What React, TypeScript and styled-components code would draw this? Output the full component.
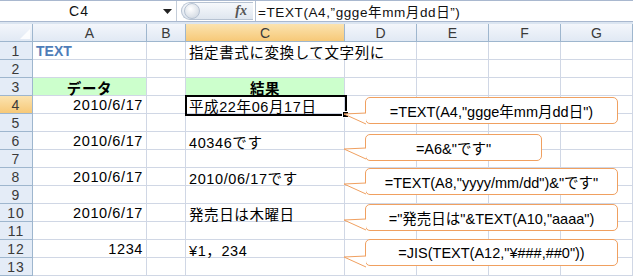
import styled, { createGlobalStyle } from 'styled-components';

const GlobalStyle = createGlobalStyle`
  html, body {
    margin: 0;
    padding: 0;
    background: #ffffff;
    overflow: hidden;
  }
`;

const COLS = [
  { key: 'A', width: 114 },
  { key: 'B', width: 39 },
  { key: 'C', width: 159 },
  { key: 'D', width: 72 },
  { key: 'E', width: 72 },
  { key: 'F', width: 72 },
  { key: 'G', width: 72 },
];

type CellData = {
  text: string;
  align?: 'left' | 'center' | 'right';
  fill?: string;
  bold?: boolean;
  heading?: boolean;
  color?: string;
  span?: number;
};

const DATA: Record<string, CellData> = {
  A1: { text: 'TEXT', bold: true, color: '#4f7db8' },
  C1: { text: '指定書式に変換して文字列に', span: 2 },
  A3: { text: 'データ', align: 'center', fill: '#ccffcc', heading: true },
  C3: { text: '結果', align: 'center', fill: '#ccffcc', heading: true },
  A4: { text: '2010/6/17', align: 'right' },
  C4: { text: '平成22年06月17日' },
  A6: { text: '2010/6/17', align: 'right' },
  C6: { text: '40346です' },
  A8: { text: '2010/6/17', align: 'right' },
  C8: { text: '2010/06/17です' },
  A10: { text: '2010/6/17', align: 'right' },
  C10: { text: '発売日は木曜日' },
  A12: { text: '1234', align: 'right' },
  C12: { text: '¥1，234' },
};

// cells swallowed by a span to their left
const COVERED = new Set(['D1']);

const CALLOUTS = [
  { text: '=TEXT(A4,"ggge年mm月dd日")', top: 97, width: 253, tipY: 16 },
  { text: '=A6&"です"', top: 134, width: 177, tipY: 14 },
  { text: '=TEXT(A8,"yyyy/mm/dd")&"です"', top: 168, width: 253, tipY: 15 },
  { text: '="発売日は"&TEXT(A10,"aaaa")', top: 204, width: 253, tipY: 15 },
  { text: '=JIS(TEXT(A12,"¥###,##0"))', top: 239, width: 253, tipY: 17 },
];

export default function App() {
  const rows = Array.from({ length: 13 }, (_, i) => i + 1);
  return (
    <>
      <GlobalStyle />
      <Frame>
        <FormulaBar>
          <NameBox>C4</NameBox>
          <DropArrow>
            <svg width="9" height="5" viewBox="0 0 9 5">
              <path d="M0 0 L9 0 L4.5 5 Z" fill="#222" />
            </svg>
          </DropArrow>
          <FxPill>
            <Grip />
            <Fx>fx</Fx>
          </FxPill>
          <FormulaInput>=TEXT(A4,&#8221;ggge年mm月dd日&#8221;)</FormulaInput>
        </FormulaBar>
        <Spacer />
        <Sheet>
          <Corner>
            <svg width="10" height="10" viewBox="0 0 10 10">
              <path d="M10 0 L10 10 L0 10 Z" fill="#ffffff" opacity="0.85" />
            </svg>
          </Corner>
          {COLS.map((c) => (
            <ColHeader key={c.key} $active={c.key === 'C'}>
              {c.key}
            </ColHeader>
          ))}
          {rows.map((r) => (
            <Row key={r}>
              <RowHeader $active={r === 4}>{r}</RowHeader>
              {COLS.filter((c) => !COVERED.has(`${c.key}${r}`)).map((c) => {
                const d = DATA[`${c.key}${r}`];
                return (
                  <Cell
                    key={c.key}
                    $align={d?.align ?? 'left'}
                    $fill={d?.fill}
                    $bold={d?.bold}
                    $heading={d?.heading}
                    $color={d?.color}
                    $span={d?.span ?? 1}
                  >
                    {d?.text}
                  </Cell>
                );
              })}
            </Row>
          ))}
          <Selection>
            <FillHandle />
          </Selection>
        </Sheet>
        {CALLOUTS.map((c) => (
          <Callout key={c.text} style={{ top: c.top, width: c.width }}>
            <Tail width="24" height="14" viewBox="0 0 24 14" style={{ top: c.tipY - 1 }}>
              <path d="M23 0 L1 1 L23 11" fill="#ffffff" stroke="#f0a060" strokeWidth="1" />
            </Tail>
            {c.text}
          </Callout>
        ))}
      </Frame>
    </>
  );
}

const cellFont = "'Liberation Sans', 'Noto Sans CJK JP', sans-serif";

const Frame = styled.div`
  position: relative;
  width: 633px;
  height: 277px;
  overflow: hidden;
  background: #ffffff;
  font-family: ${cellFont};
`;

const FormulaBar = styled.div`
  display: flex;
  align-items: stretch;
  height: 22px;
  background: #ffffff;
  border-top: 1px solid #a9b8cf;
  border-bottom: 1px solid #a9b8cf;
  box-sizing: border-box;
`;

const NameBox = styled.div`
  width: 158px;
  display: flex;
  align-items: center;
  justify-content: center;
  font-family: ${cellFont};
  font-size: 14px;
  letter-spacing: 1px;
  color: #111;
`;

const DropArrow = styled.div`
  width: 18px;
  display: flex;
  align-items: center;
  justify-content: center;
  border-right: 1px solid #c4cdd9;
`;

const FxPill = styled.div`
  width: 72px;
  margin: 1px 2px 1px 4px;
  border-radius: 10px 0 0 10px;
  background: linear-gradient(#f7f9fc, #dfe6ef);
  border: 1px solid #b6c2d2;
  border-right: none;
  display: flex;
  align-items: center;
  justify-content: space-between;
  padding: 0 6px 0 2px;
  box-sizing: border-box;
`;

const Grip = styled.div`
  width: 14px;
  height: 14px;
  border-radius: 50%;
  background: radial-gradient(circle at 40% 35%, #ffffff, #c8d1dc);
  border: 1px solid #b6c2d2;
`;

const Fx = styled.span`
  font-family: 'Liberation Serif', serif;
  font-style: italic;
  font-weight: bold;
  font-size: 14px;
  color: #555;
`;

const FormulaInput = styled.div`
  flex: 1;
  display: flex;
  align-items: center;
  padding-left: 2px;
  border-left: 1px solid #b6c2d2;
  font-family: ${cellFont};
  font-size: 13.5px;
  letter-spacing: 0.6px;
  color: #111;
  white-space: nowrap;
`;

const Spacer = styled.div`
  height: 2px;
  background: #dbe5f1;
`;

const Sheet = styled.div`
  position: relative;
  display: grid;
  grid-template-columns: 33px ${COLS.map((c) => `${c.width}px`).join(' ')};
  grid-auto-rows: 18px;
`;

const Row = styled.div`
  display: contents;
`;

const headerBg = 'linear-gradient(#f3f6fb, #e1e9f4)';
const activeBg = 'linear-gradient(#fbe3b0, #f7c978)';

const Corner = styled.div`
  background: ${headerBg};
  border-right: 1px solid #9eb6ce;
  border-bottom: 1px solid #9eb6ce;
  box-sizing: border-box;
  display: flex;
  align-items: flex-end;
  justify-content: flex-end;
  padding: 2px;
`;

const ColHeader = styled.div<{ $active?: boolean }>`
  background: ${(p) => (p.$active ? activeBg : headerBg)};
  border-right: 1px solid #9eb6ce;
  border-bottom: 1px solid #9eb6ce;
  box-sizing: border-box;
  display: flex;
  align-items: center;
  justify-content: center;
  font-family: 'Liberation Sans', sans-serif;
  font-size: 14px;
  color: #3a3a3a;
`;

const RowHeader = styled.div<{ $active?: boolean }>`
  background: ${(p) => (p.$active ? activeBg : '#e4ecf7')};
  border-right: 1px solid #9eb6ce;
  border-bottom: 1px solid #9eb6ce;
  box-sizing: border-box;
  display: flex;
  align-items: center;
  justify-content: center;
  font-family: 'Liberation Sans', sans-serif;
  font-size: 14px;
  letter-spacing: 1px;
  color: #3a3a3a;
`;

const Cell = styled.div<{
  $align: 'left' | 'center' | 'right';
  $fill?: string;
  $bold?: boolean;
  $heading?: boolean;
  $color?: string;
  $span: number;
}>`
  grid-column: span ${(p) => p.$span};
  background: ${(p) => p.$fill ?? '#ffffff'};
  border-right: 1px solid #d0d7e5;
  border-bottom: 1px solid #d0d7e5;
  box-sizing: border-box;
  display: flex;
  align-items: center;
  justify-content: ${(p) =>
    p.$align === 'center' ? 'center' : p.$align === 'right' ? 'flex-end' : 'flex-start'};
  padding: 1px 3px 0;
  white-space: nowrap;
  font-family: ${cellFont};
  font-weight: ${(p) => (p.$bold ? 700 : p.$heading ? 600 : 400)};
  font-size: ${(p) => (p.$bold ? '14px' : '14.5px')};
  letter-spacing: ${(p) => (p.$bold ? '0' : '0.6px')};
  color: ${(p) => p.$color ?? '#000'};
`;

const Selection = styled.div`
  position: absolute;
  left: 185px;
  top: 71px;
  width: 162px;
  height: 21px;
  border: 2px solid #000;
  box-sizing: border-box;
  pointer-events: none;
`;

const FillHandle = styled.div`
  position: absolute;
  right: -4px;
  bottom: -4px;
  width: 5px;
  height: 5px;
  background: #000;
  border: 1px solid #fff;
`;

const Callout = styled.div`
  position: absolute;
  left: 365px;
  height: 27px;
  box-sizing: border-box;
  background: #ffffff;
  border: 1px solid #f0a060;
  border-radius: 5px;
  display: flex;
  align-items: center;
  justify-content: center;
  font-family: 'Liberation Sans', 'Noto Sans CJK JP', sans-serif;
  font-size: 14.5px;
  color: #000;
  white-space: nowrap;
`;

const Tail = styled.svg`
  position: absolute;
  left: -23px;
  overflow: visible;
`;
